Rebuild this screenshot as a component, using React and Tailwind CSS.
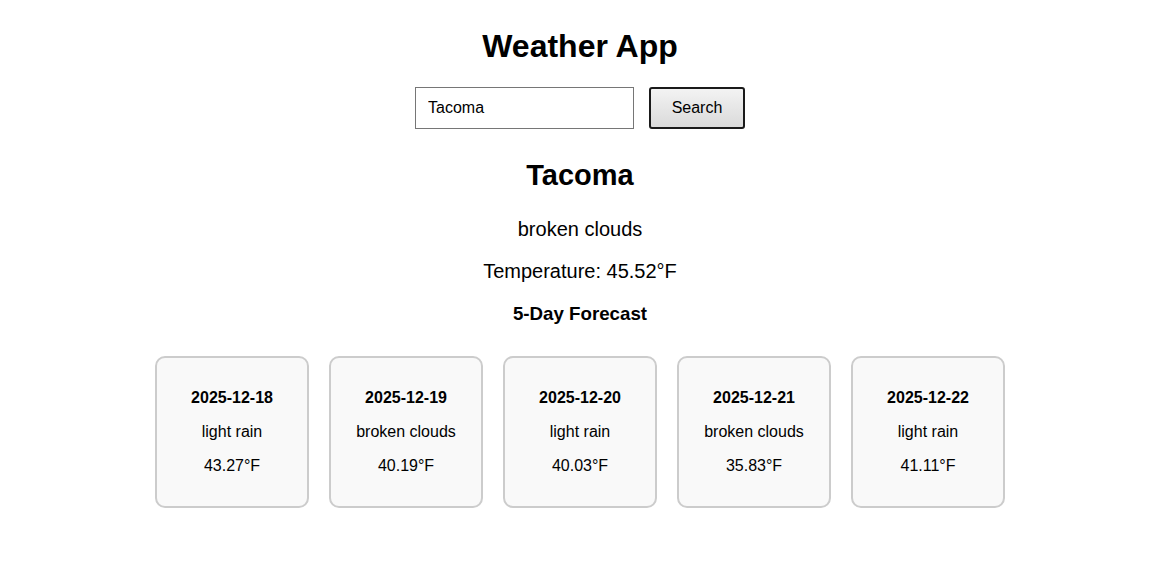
export default function App() {
  const forecast = [
    { date: "2025-12-18", desc: "light rain", temp: "43.27°F" },
    { date: "2025-12-19", desc: "broken clouds", temp: "40.19°F" },
    { date: "2025-12-20", desc: "light rain", temp: "40.03°F" },
    { date: "2025-12-21", desc: "broken clouds", temp: "35.83°F" },
    { date: "2025-12-22", desc: "light rain", temp: "41.11°F" },
  ];

  return (
    <div className="min-h-[565px] w-[1160px] bg-white text-black font-['Liberation_Sans',Arial,sans-serif] flex flex-col items-center pt-[30px]">
      <h1 className="text-[32px] leading-none font-bold">Weather App</h1>

      {/* Search */}
      <div className="mt-[25px] flex items-center gap-[15px]">
        <input
          type="text"
          defaultValue="Tacoma"
          className="w-[219px] h-[42px] border border-[#767676] px-[12px] text-[16px] outline-none"
        />
        <button className="w-[96px] h-[42px] rounded-[3px] border-2 border-[#1a1a1a] bg-gradient-to-b from-[#f3f3f3] to-[#dadada] text-[16px]">
          Search
        </button>
      </div>

      {/* Current */}
      <h2 className="mt-[32px] text-[29px] leading-none font-bold">Tacoma</h2>
      <p className="mt-[29px] text-[20px] leading-none">broken clouds</p>
      <p className="mt-[22px] text-[20px] leading-none">Temperature: 45.52°F</p>
      <h3 className="mt-[24px] text-[18.72px] leading-none font-bold">5-Day Forecast</h3>

      {/* Forecast cards */}
      <div className="mt-[32px] flex gap-[20px]">
        {forecast.map((day) => (
          <div
            key={day.date}
            className="w-[154px] border-2 border-[#cccccc] rounded-[10px] bg-[#f9f9f9] pt-[32px] pb-[32px] flex flex-col items-center gap-[18px] text-[16px] leading-none"
          >
            <p className="font-bold">{day.date}</p>
            <p>{day.desc}</p>
            <p>{day.temp}</p>
          </div>
        ))}
      </div>
    </div>
  );
}
